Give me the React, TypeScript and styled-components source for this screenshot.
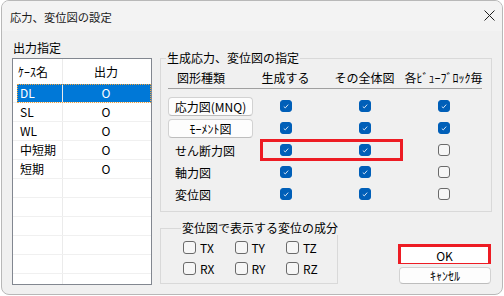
import styled, { createGlobalStyle } from 'styled-components';

const GlobalStyle = createGlobalStyle`
  html, body {
    margin: 0;
    padding: 0;
    background: #ffffff;
  }
  body {
    font-family: "Noto Sans CJK JP", "Noto Sans", sans-serif;
    font-size: 12px;
    color: #000;
  }
`;

const CASES = [
  { name: 'DL', out: 'O', selected: true },
  { name: 'SL', out: 'O' },
  { name: 'WL', out: 'O' },
  { name: '中短期', out: 'O' },
  { name: '短期', out: 'O' },
];
const EMPTY_ROWS = 6;

const DIAGRAMS = [
  { label: '応力図(MNQ)', button: true, checks: [true, true, true] },
  { label: 'ﾓｰﾒﾝﾄ図', button: true, checks: [true, true, true] },
  { label: 'せん断力図', checks: [true, true, false], highlight: true },
  { label: '軸力図', checks: [true, true, false] },
  { label: '変位図', checks: [true, true, false] },
];

const COMPONENTS = ['TX', 'TY', 'TZ', 'RX', 'RY', 'RZ'];

const App = () => {
  return (
    <>
      <GlobalStyle />
      <Window>
        <TitleBar>
          <Title>応力、変位図の設定</Title>
          <Close>
            <svg width="11" height="11" viewBox="0 0 11 11">
              <path d="M0.5 0.5 L10.5 10.5 M10.5 0.5 L0.5 10.5" stroke="#1f1f1f" strokeWidth="1" />
            </svg>
          </Close>
        </TitleBar>
        <Body>
          <LeftPane>
            <Caption>出力指定</Caption>
            <ListBox>
              <ListRow $header>
                <NameCell $header>ｹｰｽ名</NameCell>
                <OutCell>出力</OutCell>
              </ListRow>
              {CASES.map(c => (
                <ListRow key={c.name} $selected={c.selected}>
                  <NameCell>{c.name}</NameCell>
                  <OutCell>{c.out}</OutCell>
                </ListRow>
              ))}
              {Array.from({ length: EMPTY_ROWS }).map((_, i) => (
                <ListRow key={'e' + i}>
                  <NameCell />
                  <OutCell />
                </ListRow>
              ))}
            </ListBox>
          </LeftPane>
          <RightPane>
            <Group>
              <Legend>生成応力、変位図の指定</Legend>
              <HeadRow>
                <HeadName>図形種類</HeadName>
                <HeadCol>生成する</HeadCol>
                <HeadCol>その全体図</HeadCol>
                <HeadCol>各ﾋﾞｭｰﾌﾞﾛｯｸ毎</HeadCol>
              </HeadRow>
              {DIAGRAMS.map(d => (
                <DiagramRow key={d.label}>
                  {d.button ? <RowButton>{d.label}</RowButton> : <RowLabel>{d.label}</RowLabel>}
                  {d.checks.map((on, i) => (
                    <CheckCell key={i}>
                      <CheckBox on={on} size={12} />
                    </CheckCell>
                  ))}
                  {d.highlight && <Highlight />}
                </DiagramRow>
              ))}
            </Group>
            <BottomRow>
              <SmallGroup>
                <Legend>変位図で表示する変位の成分</Legend>
                <ComponentGrid>
                  {COMPONENTS.map(c => (
                    <ComponentItem key={c}>
                      <CheckBox on={false} size={13} />
                      <span>{c}</span>
                    </ComponentItem>
                  ))}
                </ComponentGrid>
              </SmallGroup>
              <ButtonColumn>
                <OkFrame>
                  <OkButton>OK</OkButton>
                </OkFrame>
                <CancelButton>ｷｬﾝｾﾙ</CancelButton>
              </ButtonColumn>
            </BottomRow>
          </RightPane>
        </Body>
      </Window>
    </>
  );
};

export default App;

const CheckBox = ({ on, size }: { on: boolean; size: number }) => (
  <Box $on={on} $size={size}>
    {on && (
      <svg width="8" height="8" viewBox="0 0 8 8">
        <path d="M1.8 4.6 L3.3 5.9 L6.2 2.6" fill="none" stroke="#d6e4f4" strokeWidth="1" />
      </svg>
    )}
  </Box>
);

const Window = styled.div`
  box-sizing: border-box;
  margin-left: 1px;
  width: 502px;
  height: 295px;
  border: 1px solid #b8b8b8;
  border-radius: 8px;
  overflow: hidden;
  background: #f0f0f0;
  display: flex;
  flex-direction: column;
`;

const TitleBar = styled.div`
  height: 30px;
  flex: none;
  background: #f3f3f3;
  display: flex;
  align-items: center;
  justify-content: space-between;
  padding: 0 7px 0 8px;
`;

const Title = styled.span`
  font-size: 11.3px;
  line-height: 14px;
  color: #1a1a1a;
  margin-top: 1px;
`;

const Close = styled.span`
  display: flex;
  width: 11px;
  height: 11px;
  margin-top: -1px;
`;

const Body = styled.div`
  display: flex;
  gap: 8px;
  padding: 9px 10px 0 10px;
`;

const LeftPane = styled.div`
  width: 140px;
  display: flex;
  flex-direction: column;
`;

const Caption = styled.div`
  line-height: 16px;
  margin-bottom: 2px;
  padding-left: 1px;
`;

const ListBox = styled.div`
  box-sizing: border-box;
  height: 227px;
  border: 1px solid #828790;
  background: #ffffff;
  overflow: hidden;
`;

const ListRow = styled.div<{ $header?: boolean; $selected?: boolean }>`
  position: relative;
  display: grid;
  grid-template-columns: 50px 1fr;
  height: ${p => (p.$header ? '25px' : '19px')};
  line-height: ${p => (p.$header ? '25px' : '18px')};
  box-sizing: border-box;
  border-bottom: 1px solid ${p => (p.$header ? 'transparent' : '#f0f0f0')};
  color: ${p => (p.$selected ? '#ffffff' : '#000000')};
  background: ${p => (p.$selected ? 'linear-gradient(to right, transparent 4px, #0078d7 4px)' : 'transparent')};
  &::after {
    content: '';
    display: ${p => (p.$selected ? 'block' : 'none')};
    position: absolute;
    left: 4px;
    right: 0;
    top: 0;
    bottom: -1px;
    border: 1px dotted #f2a33a;
  }
`;

const NameCell = styled.div<{ $header?: boolean }>`
  border-right: 1px solid #ebebeb;
  padding-left: ${p => (p.$header ? '5px' : '7px')};
  white-space: nowrap;
`;

const OutCell = styled.div`
  text-align: center;
  padding-right: 2px;
`;

const RightPane = styled.div`
  width: 332px;
  padding-top: 11px;
  display: flex;
  flex-direction: column;
`;

const Group = styled.fieldset`
  margin: 0;
  min-width: 0;
  padding: 0 9px 6px 7px;
  border: 1px solid #d9d9d9;
`;

const Legend = styled.legend`
  padding: 0 1px;
  margin-left: -2px;
  line-height: 14px;
  white-space: nowrap;
`;

const columns = `78px repeat(3, 79px)`;

const HeadRow = styled.div`
  display: grid;
  grid-template-columns: ${columns};
  margin-top: 5px;
  line-height: 16px;
  padding-bottom: 2px;
  border-bottom: 1px solid #a0a0a0;
  margin-bottom: 6px;
`;

const HeadName = styled.div`
  padding-left: 9px;
  white-space: nowrap;
`;

const HeadCol = styled.div`
  text-align: center;
  white-space: nowrap;
`;

const DiagramRow = styled.div`
  position: relative;
  display: grid;
  grid-template-columns: ${columns};
  align-items: center;
  height: 22px;
`;

const RowButton = styled.button`
  box-sizing: border-box;
  width: 85px;
  height: 19px;
  padding: 0;
  font-family: inherit;
  font-size: 12px;
  line-height: 17px;
  color: #000;
  background: #fdfdfd;
  border: 1px solid #d2d2d2;
  border-bottom-color: #bdbdbd;
  border-radius: 4px;
  white-space: nowrap;
`;

const RowLabel = styled.div`
  padding-left: 7px;
  white-space: nowrap;
`;

const CheckCell = styled.div`
  display: flex;
  justify-content: center;
`;

const Box = styled.span<{ $on: boolean; $size: number }>`
  box-sizing: border-box;
  display: inline-flex;
  align-items: center;
  justify-content: center;
  flex: none;
  width: ${p => p.$size}px;
  height: ${p => p.$size}px;
  border-radius: 3px;
  border: 1px solid ${p => (p.$on ? '#005fb8' : '#6a6a6a')};
  background: ${p => (p.$on ? '#005fb8' : '#f6f6f6')};
`;

const Highlight = styled.div`
  position: absolute;
  left: 92px;
  top: 0;
  width: 143px;
  height: 22px;
  box-sizing: border-box;
  border: 3px solid #ed1c24;
`;

const BottomRow = styled.div`
  display: flex;
  justify-content: space-between;
  align-items: flex-end;
  margin-top: 9px;
`;

const SmallGroup = styled.fieldset`
  margin: 0;
  min-width: 0;
  width: 178px;
  box-sizing: border-box;
  padding: 2px 0 4px 22px;
  border: 1px solid #d9d9d9;
`;

const ComponentGrid = styled.div`
  display: grid;
  grid-template-columns: repeat(3, 51.5px);
  grid-auto-rows: 21px;
  align-items: center;
`;

const ComponentItem = styled.label`
  display: flex;
  align-items: center;
  gap: 4px;
  line-height: 14px;
`;

const ButtonColumn = styled.div`
  display: flex;
  flex-direction: column;
  align-items: flex-end;
  gap: 3px;
  margin-right: 1px;
  margin-bottom: 0px;
`;

const OkFrame = styled.div`
  box-sizing: border-box;
  width: 93px;
  height: 20px;
  border: 3px solid #ed1c24;
  background: #ffffff;
`;

const OkButton = styled.button`
  width: 100%;
  height: 100%;
  padding: 0;
  border: none;
  background: #ffffff;
  font-family: inherit;
  font-size: 12px;
  line-height: 14px;
  color: #000;
`;

const CancelButton = styled.button`
  box-sizing: border-box;
  width: 92px;
  height: 17px;
  padding: 0;
  font-family: inherit;
  font-size: 12px;
  line-height: 15px;
  color: #000;
  background: #fdfdfd;
  border: 1px solid #d2d2d2;
  border-bottom-color: #bdbdbd;
  border-radius: 4px;
`;
